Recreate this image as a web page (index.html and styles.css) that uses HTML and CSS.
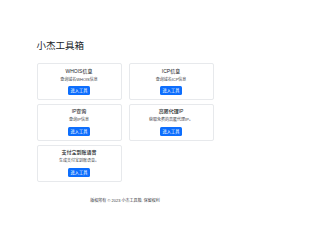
FILE: index.html
```html
<!DOCTYPE html>
<html lang="zh-CN">
<head>
<meta charset="utf-8">
<title>小杰工具箱</title>
<link rel="stylesheet" href="styles.css">
</head>
<body>
<main class="container">
  <h1 class="page-title">小杰工具箱</h1>
  <div class="tool-grid">
    <div class="card">
      <h5 class="card-title">WHOIS信息</h5>
      <p class="card-text">查询域名WHOIS信息</p>
      <a class="btn" href="#">进入工具</a>
    </div>
    <div class="card">
      <h5 class="card-title">ICP信息</h5>
      <p class="card-text">查询域名ICP信息</p>
      <a class="btn" href="#">进入工具</a>
    </div>
    <div class="card">
      <h5 class="card-title">IP查询</h5>
      <p class="card-text">查询IP信息</p>
      <a class="btn" href="#">进入工具</a>
    </div>
    <div class="card">
      <h5 class="card-title">高匿代理IP</h5>
      <p class="card-text">获取免费的高匿代理IP。</p>
      <a class="btn" href="#">进入工具</a>
    </div>
    <div class="card">
      <h5 class="card-title">支付宝到账语音</h5>
      <p class="card-text">生成支付宝到账语音。</p>
      <a class="btn" href="#">进入工具</a>
    </div>
  </div>
  <footer class="footer">版权所有 © 2023 小杰工具箱. 保留权利</footer>
</main>
</body>
</html>
```

FILE: styles.css
```css
html, body {
  margin: 0;
  padding: 0;
  background: #ffffff;
}
body {
  width: 250px;
  font-family: "Liberation Sans", "Noto Sans CJK SC", sans-serif;
  color: #212529;
}
.container {
  width: 177px;
  margin: 0 auto;
  padding-top: 39.5px;
}
.page-title {
  font-size: 9.5px;
  line-height: 12px;
  font-weight: 400;
  margin: 0 0 11.5px 0;
}
.tool-grid {
  display: grid;
  grid-template-columns: 85px 85px;
  column-gap: 7px;
  row-gap: 4px;
}
.card {
  border: 1px solid #e7e9ec;
  border-radius: 2px;
  padding: 3.5px 3px 3.7px;
  text-align: center;
  display: flex;
  flex-direction: column;
  align-items: center;
}
.card-title {
  font-size: 5px;
  line-height: 6px;
  font-weight: 500;
  margin: 0 0 3px 0;
}
.card-text {
  font-size: 4px;
  line-height: 5px;
  color: #3d4247;
  margin: 0 0 4.5px 0;
}
.btn {
  display: block;
  background: #0d6efd;
  color: #ffffff;
  font-size: 4.2px;
  line-height: 9.3px;
  height: 9.3px;
  padding: 0 3px;
  border-radius: 1.5px;
  text-decoration: none;
}
.footer {
  margin-top: 16.5px;
  font-size: 4px;
  line-height: 5px;
  text-align: center;
  color: #3d4247;
}
```
